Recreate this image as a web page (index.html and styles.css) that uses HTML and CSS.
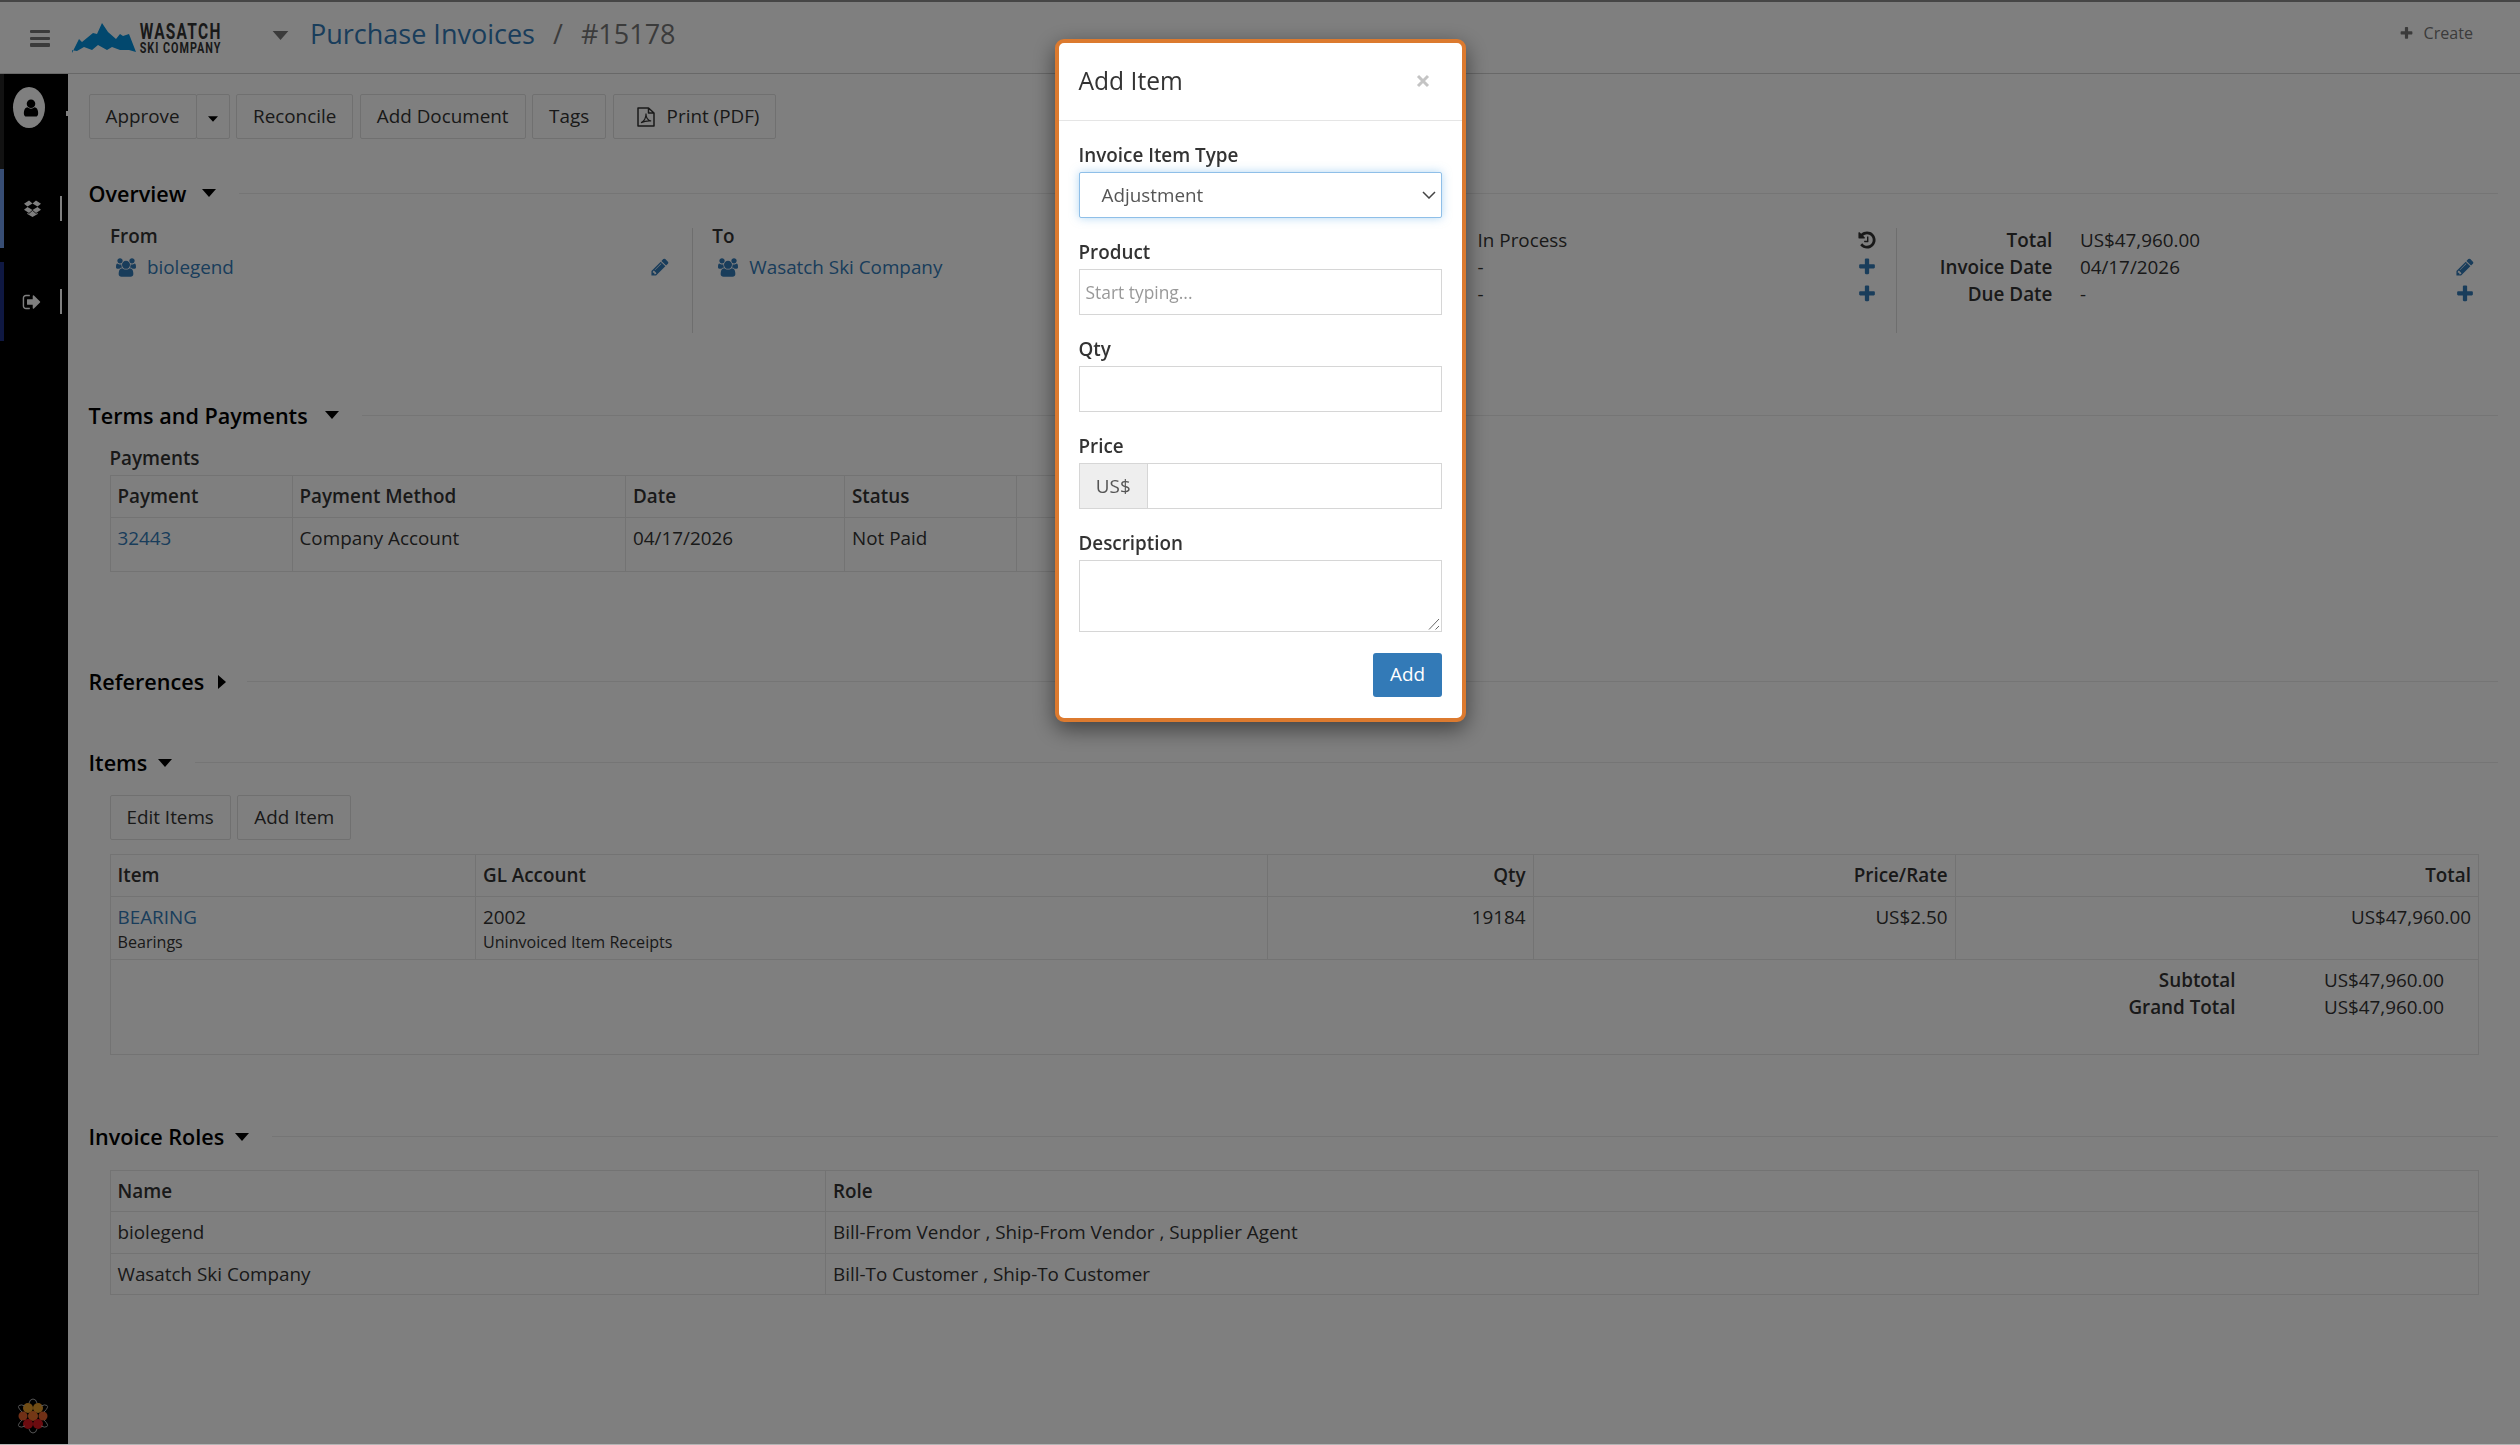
FILE: index.html
```html
<!DOCTYPE html>
<html lang="en">

<head>
  <meta charset="UTF-8">
  <meta name="viewport" content="width=device-width, initial-scale=1.0">
  <title>Purchase Invoices / #15178</title>
  <link rel="stylesheet" href="styles.css">
</head>

<body>
  <!-- Icon sprite -->
  <svg class="sprite">
    <symbol id="i-plus" viewBox="0 0 1792 1792"><path d="M1600 736v192q0 40-28 68t-68 28h-416v416q0 40-28 68t-68 28h-192q-40 0-68-28t-28-68v-416h-416q-40 0-68-28t-28-68v-192q0-40 28-68t68-28h416v-416q0-40 28-68t68-28h192q40 0 68 28t28 68v416h416q40 0 68 28t28 68z"/></symbol>
    <symbol id="i-pencil" viewBox="0 0 1792 1792"><path d="M491 1536l91-91-235-235-91 91v107h128v128h107zm523-928q0-22-22-22-10 0-17 7l-542 542q-7 7-7 17 0 22 22 22 10 0 17-7l542-542q7-7 7-17zm-54-192l416 416-832 832h-416v-416zm683 96q0 53-37 90l-166 166-416-416 166-165q36-38 90-38 53 0 91 38l235 234q37 39 37 91z"/></symbol>
    <symbol id="i-history" viewBox="0 0 1792 1792"><path d="M1664 896q0 156-61 298t-164 245-245 164-298 61q-172 0-327-72.5t-264-204.5q-7-10-6.5-22.5t8.5-20.5l137-138q10-9 25-9 16 2 23 12 73 95 179 147t225 52q104 0 198.5-40.5t163.5-109.5 109.5-163.5 40.5-198.5-40.5-198.5-109.5-163.5-163.5-109.5-198.5-40.5q-98 0-188 35.5t-160 101.5l137 138q31 30 14 69-17 40-59 40h-448q-26 0-45-19t-19-45v-448q0-42 40-59 39-17 69 14l130 129q107-101 244.5-156.5t284.5-55.5q156 0 298 61t245 164 164 245 61 298zm-640-288v448q0 14-9 23t-23 9h-320q-14 0-23-9t-9-23v-64q0-14 9-23t23-9h224v-352q0-14 9-23t23-9h64q14 0 23 9t9 23z"/></symbol>
    <symbol id="i-users" viewBox="0 0 1920 1792"><path d="M593 896q-162 5-265 128h-134q-82 0-138-40.5t-56-118.5q0-353 124-353 6 0 43.5 21t97.5 42.5 119 21.5q67 0 133-23-5 37-5 66 0 139 81 256zm1071 637q0 120-73 189.5t-194 69.5h-874q-121 0-194-69.5t-73-189.5q0-53 3.5-103.5t14-109 26.5-108.5 43-97.5 62-81 85.5-53.5 111.5-20q10 0 43 21.5t73 48 107 48 135 21.5 135-21.5 107-48 73-48 43-21.5q61 0 111.5 20t85.5 53.5 62 81 43 97.5 26.5 108.5 14 109 3.5 103.5zm-1024-1277q0 106-75 181t-181 75-181-75-75-181 75-181 181-75 181 75 75 181zm704 384q0 159-112.5 271.5t-271.5 112.5-271.5-112.5-112.5-271.5 112.5-271.5 271.5-112.5 271.5 112.5 112.5 271.5zm576 225q0 78-56 118.5t-138 40.5h-134q-103-123-265-128 81-117 81-256 0-29-5-66 66 23 133 23 59 0 119-21.5t97.5-42.5 43.5-21q124 0 124 353zm-128-609q0 106-75 181t-181 75-181-75-75-181 75-181 181-75 181 75 75 181z"/></symbol>
    <symbol id="i-signout" viewBox="0 0 1792 1792"><path d="M704 1440q0 4 1 20t.5 26.5-3 23.5-10 19.5-20.5 6.5h-320q-119 0-203.5-84.5t-84.5-203.5v-704q0-119 84.5-203.5t203.5-84.5h320q13 0 22.5 9.5t9.5 22.5q0 4 1 20t.5 26.5-3 23.5-10 19.5-20.5 6.5h-320q-66 0-113 47t-47 113v704q0 66 47 113t113 47h312l11.5 1 11.5 3 8 5.5 7 9 2 13.5zm928-544q0 26-19 45l-544 544q-19 19-45 19t-45-19-19-45v-288h-448q-26 0-45-19t-19-45v-384q0-26 19-45t45-19h448v-288q0-26 19-45t45-19 45 19l544 544q19 19 19 45z"/></symbol>
    <symbol id="i-user" viewBox="0 0 1792 1792"><path d="M1536 1399q0 109-62.5 187t-150.5 78h-854q-88 0-150.5-78t-62.5-187q0-85 8.5-160.5t31.5-152 58.5-131 94-89 134.5-34.5q131 128 313 128t313-128q76 0 134.5 34.5t94 89 58.5 131 31.5 152 8.5 160.5zm-256-887q0 159-112.5 271.5t-271.5 112.5-271.5-112.5-112.5-271.5 112.5-271.5 271.5-112.5 271.5 112.5 112.5 271.5z"/></symbol>
    <symbol id="i-dropbox" viewBox="0 0 18 17"><path d="M5.3 0L9 3.2 3.7 6.5 0 3.5zM12.7 0L18 3.5l-3.7 3L9 3.2zM3.7 7L9 10.2l-3.7 3.1L0 9.9zM14.3 7L18 9.9l-5.3 3.4L9 10.2zM9 11l3.7 3.1 1.8-1.1v1.3L9 17.4l-5.500-3.100V13l1.800 1.100z"/></symbol>
    <symbol id="i-pdf" viewBox="0 0 18 20"><path fill="none" stroke="currentColor" stroke-width="1.5" stroke-linejoin="round" d="M1 1h10.500L17 6v13H1zM11.500 1v5H17"/><path fill="none" stroke="currentColor" stroke-width="1.1" d="M4 15.800c3-1.500 5-5 5-9.300 0 4.500 2 7 5.200 7.500-3.500-.4-6.500.1-10.200 1.800"/></symbol>
    <symbol id="i-down" viewBox="0 0 14 8"><path d="M0 0h14L7 8z"/></symbol>
    <symbol id="i-right" viewBox="0 0 8 14"><path d="M0 0v14l8-7z"/></symbol>
  </svg>

  <!-- Header -->
  <header class="topbar">
    <div class="burger"><span></span><span></span><span></span></div>
    <svg class="logo" viewBox="0 -6 160 44">
      <path fill="#0490dc" d="M0 30L7 16l3 3 11-9 4 1L30 0l6 9 8 7 4-5 3 2 6-2 7 18-7-2-9 0-8-3-5 3-9-5-6 5-8-3-7 4-6-1z"/>
      <g class="logo-text" transform="scale(.72 1)">
        <text x="94" y="15.500" font-size="21.500" textLength="112">WASATCH</text>
        <text x="94" y="30" font-size="15" textLength="112">SKI COMPANY</text>
      </g>
    </svg>
    <svg class="crumb-caret"><use href="#i-down"/></svg>
    <div class="breadcrumb"><a>Purchase Invoices</a><span>/</span><span>#15178</span></div>
    <div class="create"><svg><use href="#i-plus"/></svg>Create</div>
  </header>

  <div class="layout">
    <!-- Sidebar -->
    <nav class="sidebar">
      <div class="side-item profile">
        <div class="avatar"><svg><use href="#i-user"/></svg></div>
        <i class="name-edge"></i>
      </div>
      <div class="side-item active"><svg><use href="#i-dropbox"/></svg><i></i></div>
      <div class="side-item logout"><svg><use href="#i-signout"/></svg><i></i></div>
      <svg class="atom" viewBox="0 0 32 36">
        <circle cx="11" cy="10" r="5" fill="#e59a2a"/><circle cx="21" cy="10" r="5" fill="#e59a2a"/>
        <circle cx="6" cy="18" r="4.500" fill="#e0602c"/><circle cx="26" cy="18" r="4.500" fill="#e0602c"/>
        <circle cx="16" cy="18" r="5" fill="#e8702c"/>
        <circle cx="11" cy="26" r="5" fill="#d8171f"/><circle cx="21" cy="26" r="5" fill="#d8171f"/>
        <g fill="none" stroke="#aaa">
          <path d="M12 5q1-4 4-4t4 4M12 31q1 4 4 4t4-4M5 14Q0 9 2 7.500t6 .5M27 14q5-5 3-6.500t-6 .5M5 22q-5 5-3 6.500t6-.5M27 22q5 5 3 6.500t-6-.5"/>
        </g>
      </svg>
    </nav>

    <!-- Main Content -->
    <main>
      <div class="toolbar">
        <div class="btn-group"><button class="btn">Approve</button><button class="btn toggle"><svg><use href="#i-down"/></svg></button></div>
        <button class="btn">Reconcile</button>
        <button class="btn">Add Document</button>
        <button class="btn">Tags</button>
        <button class="btn print"><svg><use href="#i-pdf"/></svg>Print (PDF)</button>
      </div>

      <section class="overview">
        <h2>Overview <svg class="down"><use href="#i-down"/></svg></h2>
        <div class="columns">
          <div class="col">
            <div class="party">
              <b>From</b>
              <div class="party-row"><svg class="users"><use href="#i-users"/></svg><a>biolegend</a><svg class="act"><use href="#i-pencil"/></svg></div>
            </div>
          </div>
          <div class="col">
            <div class="party">
              <b>To</b>
              <div class="party-row"><svg class="users"><use href="#i-users"/></svg><a>Wasatch Ski Company</a></div>
            </div>
          </div>
          <div class="col">
            <dl>
              <dt></dt><dd>In Process</dd><svg class="dark"><use href="#i-history"/></svg>
              <dt></dt><dd>-</dd><svg><use href="#i-plus"/></svg>
              <dt></dt><dd>-</dd><svg><use href="#i-plus"/></svg>
            </dl>
          </div>
          <div class="col">
            <dl>
              <dt>Total</dt><dd>US$47,960.00</dd><span></span>
              <dt>Invoice Date</dt><dd>04/17/2026</dd><svg><use href="#i-pencil"/></svg>
              <dt>Due Date</dt><dd>-</dd><svg><use href="#i-plus"/></svg>
            </dl>
          </div>
        </div>
      </section>

      <section class="terms">
        <h2>Terms and Payments <svg class="down"><use href="#i-down"/></svg></h2>
        <b class="sub-title">Payments</b>
        <table class="payments">
          <colgroup><col class="p1"><col class="p2"><col class="p3"><col class="p4"><col></colgroup>
          <tr><th>Payment</th><th>Payment Method</th><th>Date</th><th>Status</th><th></th></tr>
          <tr><td><a>32443</a></td><td>Company Account</td><td>04/17/2026</td><td>Not Paid</td><td></td></tr>
        </table>
      </section>

      <section class="references">
        <h2>References <svg class="right"><use href="#i-right"/></svg></h2>
      </section>

      <section class="items">
        <h2>Items <svg class="down"><use href="#i-down"/></svg></h2>
        <div class="toolbar">
          <button class="btn">Edit Items</button>
          <button class="btn">Add Item</button>
        </div>
        <table>
          <colgroup><col class="c1"><col class="c2"><col class="c3"><col class="c4"><col></colgroup>
          <tr><th>Item</th><th>GL Account</th><th class="num">Qty</th><th class="num">Price/Rate</th><th class="num">Total</th></tr>
          <tr class="item-row">
            <td><a>BEARING</a><small>Bearings</small></td>
            <td>2002<small>Uninvoiced Item Receipts</small></td>
            <td class="num">19184</td>
            <td class="num">US$2.50</td>
            <td class="num">US$47,960.00</td>
          </tr>
          <tr class="totals">
            <td colspan="5">
              <div><b>Subtotal</b><span>US$47,960.00</span></div>
              <div><b>Grand Total</b><span>US$47,960.00</span></div>
            </td>
          </tr>
        </table>
      </section>

      <section class="roles">
        <h2>Invoice Roles <svg class="down"><use href="#i-down"/></svg></h2>
        <table>
          <colgroup><col class="r1"><col></colgroup>
          <tr><th>Name</th><th>Role</th></tr>
          <tr><td>biolegend</td><td>Bill-From Vendor , Ship-From Vendor , Supplier Agent</td></tr>
          <tr><td>Wasatch Ski Company</td><td>Bill-To Customer , Ship-To Customer</td></tr>
        </table>
      </section>
    </main>
  </div>

  <!-- Modal -->
  <div class="backdrop"></div>
  <div class="page-edge"></div>
  <div class="modal">
    <div class="modal-header">
      <h4>Add Item</h4>
      <svg viewBox="0 0 14 14"><path d="M2 2l10 10M12 2L2 12"/></svg>
    </div>
    <form class="modal-body">
      <label>Invoice Item Type</label>
      <div class="control select">Adjustment<svg viewBox="0 0 14 8"><path d="M1 1l6 6 6-6"/></svg></div>
      <label>Product</label>
      <input class="control" type="text" placeholder="Start typing...">
      <label>Qty</label>
      <input class="control" type="text">
      <label>Price</label>
      <div class="input-group"><span>US$</span><input class="control" type="text"></div>
      <label>Description</label>
      <div class="control area"><svg viewBox="0 0 12 12"><path d="M1 11.500L11 1M7.500 11.500L11 8"/></svg></div>
      <button class="add" type="button">Add</button>
    </form>
  </div>
</body>

</html>
```
FILE: styles.css
```css
* {
  margin: 0;
  padding: 0;
  box-sizing: border-box;
}

html, body {
  height: 100%;
  overflow: hidden;
}

body {
  display: flex;
  flex-direction: column;
  font-family: "Open Sans", sans-serif;
  font-size: 18.85px;
  line-height: 27px;
  color: #333;
  background: white;
}

svg {
  fill: currentColor;
  flex-shrink: 0;
}

.sprite {
  display: none;
}

a {
  color: #337ab7;
}

b, th, dt {
  font-weight: 600;
}

/* Header */
.topbar {
  display: flex;
  align-items: flex-start;
  height: 74px;
  flex-shrink: 0;
  padding-left: 30px;
  border-top: 2px solid #8c8c8c;
  border-bottom: 1px solid #d0d0d0;
}

.burger {
  display: flex;
  flex-direction: column;
  gap: 3.500px;
  width: 20px;
  margin-top: 28px;
}

.burger span {
  height: 3.200px;
  border-radius: 1px;
  background: #777;
}

.logo {
  width: 160px;
  height: 44px;
  margin: 15px 0 0 22px;
}

.logo-text {
  font-family: Roboto, "Liberation Sans", sans-serif;
  font-weight: 700;
  fill: #333;
}

.crumb-caret {
  width: 17px;
  height: 9px;
  margin: 29px 0 0 40px;
  color: #777;
}

.breadcrumb {
  display: flex;
  margin: 14px 0 0 21px;
  font-size: 27px;
  line-height: 36px;
  color: #777;
}

.breadcrumb span {
  margin-left: 18px;
}

.create {
  display: flex;
  align-items: center;
  gap: 9.500px;
  margin: 18px 47px 0 auto;
  font-size: 16.100px;
  color: #777;
}

.create svg {
  width: 15px;
  height: 15px;
}

.layout {
  display: flex;
  flex: 1;
}

/* Sidebar */
.sidebar {
  display: flex;
  flex-direction: column;
  flex-shrink: 0;
  width: 67.500px;
  background: black;
}

.side-item {
  display: flex;
  align-items: center;
  height: 79px;
  padding-left: 20px;
  border-left: 4px solid #6f9ae8;
}

.side-item svg {
  width: 17px;
  height: 17px;
  color: white;
}

.side-item > i {
  width: 2px;
  height: 25px;
  margin-left: 19px;
  background: white;
}

.profile {
  align-items: flex-start;
  height: 95px;
  padding: 13px 0 0 9px;
  border-left-color: #242424;
}

.avatar {
  display: flex;
  align-items: center;
  justify-content: center;
  width: 32px;
  height: 41px;
  padding-left: 4px;
  border-radius: 50%;
  background: white;
}

.avatar svg {
  width: 20px;
  height: 20px;
  color: black;
}

.profile .name-edge {
  width: 2px;
  height: 5px;
  margin: 24px 0 0 auto;
}

.logout {
  margin-top: 14px;
  border-left-color: #1f3184;
}

.logout svg {
  width: 20px;
  height: 20px;
  margin-left: -2px;
  margin-right: -1px;
}

.atom {
  width: 32px;
  height: 36px;
  margin: auto 0 11px 17px;
}

/* Main */
main {
  flex: 1;
  min-width: 0;
  padding: 20px 22px 0 21px;
}

.toolbar {
  display: flex;
  gap: 6.500px;
}

.btn {
  height: 45px;
  padding: 0 16px;
  font: inherit;
  color: #333;
  background: white;
  border: 1px solid #e0e0e0;
  border-radius: 2px;
}

.btn-group {
  display: flex;
}

.btn.toggle {
  width: 34px;
  margin-left: -1px;
  padding: 0;
}

.toggle svg {
  width: 10px;
  height: 6px;
  color: black;
  vertical-align: 1px;
}

.print {
  display: flex;
  align-items: center;
  padding-left: 23px;
}

.print svg {
  width: 18px;
  height: 20px;
  margin-right: 12px;
}

h2 {
  display: flex;
  align-items: center;
  height: 30px;
  font-size: 21.600px;
  font-weight: 600;
  color: black;
}

h2::after {
  content: "";
  flex: 1;
  height: 1px;
  margin-left: 23px;
  background: #eaeaea;
}

h2 .down {
  width: 14px;
  height: 8px;
  margin-left: 16px;
}

h2 .right {
  width: 8px;
  height: 14px;
  margin-left: 14px;
}

.overview {
  height: 222px;
  margin-top: 39px;
}

.columns {
  display: grid;
  grid-template-columns: repeat(4, 602.300px);
  margin: 19.500px 0 0 2px;
}

.col {
  height: 105px;
  border-right: 1px solid #dcdcdc;
}

.col:last-child {
  border: 0;
}

.party {
  margin-top: -5px;
  padding: 0 22px 0 19.500px;
}

.party b {
  display: block;
  line-height: 27px;
}

.party-row {
  display: flex;
  align-items: center;
  margin-top: 4px;
  padding-left: 6px;
}

.users {
  width: 20px;
  height: 19px;
  margin-right: 11px;
  color: #337ab7;
}

.act {
  width: 20px;
  height: 20px;
  margin-left: auto;
  color: #337ab7;
}

dl {
  display: grid;
  grid-template-columns: 155px 1fr 20px;
  grid-auto-rows: 27px;
  align-items: center;
  margin-top: -1px;
  padding-right: 19px;
}

.col:last-child dl {
  padding-right: 24.500px;
}

dt {
  text-align: right;
}

dd {
  padding-left: 27.500px;
}

dl svg {
  width: 20px;
  height: 20px;
  color: #337ab7;
}

dl .dark {
  color: #333;
}

.terms {
  height: 266.500px;
}

.terms .down {
  margin-left: 17px;
}

.sub-title {
  display: block;
  margin: 15px 0 3px 21px;
}

table {
  width: 2369.500px;
  margin-left: 21px;
  table-layout: fixed;
  border-collapse: collapse;
}

th, td {
  height: 41.500px;
  padding: 7px 7px 6px;
  border: 1px solid #e6e6e6;
  text-align: left;
  vertical-align: top;
}

th.num, td.num {
  text-align: right;
}

.payments {
  width: 1200px;
}

.payments td {
  height: 54px;
}

.p1 { width: 182px; }
.p2 { width: 333.500px; }
.p3 { width: 219px; }
.p4 { width: 171.500px; }

.references {
  height: 81px;
}

.references h2::after {
  margin-left: 21px;
}

.items {
  height: 374px;
}

.items .down {
  margin-left: 11px;
}

.items .toolbar {
  margin: 17.500px 0 14px 21px;
}

.c1 { width: 365.500px; }
.c2 { width: 792px; }
.c3 { width: 265.500px; }
.c4 { width: 422px; }

small {
  display: block;
  font-size: 16.100px;
  line-height: 22px;
}

.item-row td {
  height: 63.500px;
  padding-top: 7px;
}

.totals td {
  height: 95px;
  padding: 7px 34px 0 0;
}

.totals div {
  display: flex;
  justify-content: flex-end;
}

.totals span {
  width: 208.500px;
  text-align: right;
}

.roles .down {
  margin-left: 11px;
}

.roles table {
  margin-top: 18px;
}

.r1 { width: 715.500px; }

/* Modal */
.backdrop {
  position: fixed;
  inset: 0;
  background: rgba(0, 0, 0, 0.5);
}

.page-edge {
  position: fixed;
  left: 0;
  right: 0;
  bottom: 0;
  height: 1px;
  background: #b4b4b4;
}

.modal {
  position: fixed;
  top: 39px;
  left: 1054.500px;
  width: 411.500px;
  height: 683px;
  background: white;
  border: 4.500px solid #dc7a2f;
  border-radius: 9px;
  box-shadow: 0 7px 22px rgba(0, 0, 0, 0.5);
}

.modal-header {
  display: flex;
  align-items: center;
  justify-content: space-between;
  height: 78px;
  padding: 0 32px 2px 20px;
  border-bottom: 1px solid #e5e5e5;
}

.modal-header h4 {
  font-size: 24.600px;
  font-weight: 400;
}

.modal-header svg {
  width: 14px;
  height: 14px;
  stroke: #c4c4c4;
  stroke-width: 3;
}

.modal-body {
  display: flex;
  flex-direction: column;
  padding: 21px 20px 0 20px;
}

.modal-body label {
  height: 27px;
  margin-bottom: 3px;
  font-weight: 600;
}

.control {
  width: 100%;
  height: 46px;
  margin-bottom: 21px;
  padding: 0 6px;
  font: inherit;
  font-size: 17.400px;
  color: #555;
  background: white;
  border: 1px solid #d6d6d6;
}

.control::placeholder {
  color: #999;
}

.select {
  display: flex;
  align-items: center;
  justify-content: space-between;
  padding: 0 5px 0 22px;
  font-size: 18.850px;
  border-color: #8fbfe8;
  border-radius: 2px;
  box-shadow: 0 0 10px rgba(102, 175, 233, 0.5);
}

.select svg {
  width: 14px;
  height: 8px;
  fill: none;
  stroke: #444;
  stroke-width: 1.500;
}

.input-group {
  display: flex;
}

.input-group span {
  width: 68.500px;
  height: 46px;
  line-height: 44px;
  text-align: center;
  color: #555;
  background: #eee;
  border: 1px solid #d6d6d6;
  border-right: 0;
  flex-shrink: 0;
}

.area {
  display: flex;
  align-items: flex-end;
  justify-content: flex-end;
  height: 72px;
  margin-bottom: 20.500px;
  padding: 0 1px 1px;
}

.area svg {
  width: 12px;
  height: 12px;
  stroke: #666;
}

.add {
  align-self: flex-end;
  width: 69px;
  height: 44.500px;
  font: inherit;
  color: white;
  background: #337ab7;
  border: 0;
  border-radius: 3px;
}
```
